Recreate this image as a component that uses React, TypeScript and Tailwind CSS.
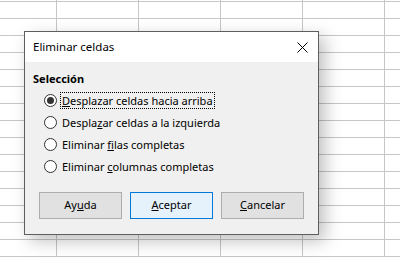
import React from 'react'

const COLS = [57, 82, 82, 82, 82, 82]
const ROWS = 16

function Sheet() {
  return (
    <div className="mt-[-15px] grid grid-cols-[57px_82px_82px_82px_82px_82px] auto-rows-[17px]">
      {Array.from({ length: ROWS * COLS.length }).map((_, i) => (
        <div key={i} className="border-r border-b border-[#c6c6c6]" />
      ))}
    </div>
  )
}

function Radio({ checked, children }: { checked?: boolean; children: React.ReactNode }) {
  return (
    <div className="flex h-[22px] items-center">
      <span className="flex h-[13px] w-[13px] items-center justify-center rounded-full border border-[#333333] bg-white">
        {checked && <span className="h-[7px] w-[7px] rounded-full bg-[#333333]" />}
      </span>
      <span
        className={`ml-[3px] px-[1px] leading-[15px] ${checked ? 'border border-dotted border-black' : 'border border-transparent'}`}
      >
        {children}
      </span>
    </div>
  )
}

function Btn({ primary, children }: { primary?: boolean; children: React.ReactNode }) {
  return (
    <button
      type="button"
      className={`flex h-[27px] w-[83px] items-center justify-center border ${primary ? 'border-[#0078d7] bg-[#e5f1fb]' : 'border-[#adadad] bg-[#e1e1e1]'}`}
    >
      {children}
    </button>
  )
}

export default function App() {
  return (
    <div className="relative h-[261px] w-[400px] overflow-hidden bg-white font-['Noto_Sans',sans-serif] text-[11px] text-black">
      <Sheet />

      <div className="absolute left-[24px] top-[31px] flex h-[204px] w-[295px] flex-col border border-[#5e5e5e] shadow-[6px_6px_16px_rgba(0,0,0,0.25)]">
        <div className="flex h-[30px] items-center justify-between bg-white pl-[8px] pr-[10px]">
          <span className="text-[11.5px]">Eliminar celdas</span>
          <svg width="11" height="11" viewBox="0 0 11 11">
            <path d="M0.5 0.5L10.5 10.5M10.5 0.5L0.5 10.5" stroke="#000" strokeWidth="1" fill="none" />
          </svg>
        </div>

        <div className="flex flex-1 flex-col bg-[#f0f0f0] px-[8px] pt-[9px]">
          <div className="h-[18px] font-bold leading-[16px]">Selección</div>
          <div className="ml-[11px]">
            <Radio checked>
              <u>D</u>esplazar celdas hacia arriba
            </Radio>
            <Radio>
              Despla<u>z</u>ar celdas a la izquierda
            </Radio>
            <Radio>
              Eliminar <u>f</u>ilas completas
            </Radio>
            <Radio>
              Eliminar <u>c</u>olumnas completas
            </Radio>
          </div>

          <div className="mt-[15px] flex gap-[8px] pl-[6px]">
            <Btn>
              Ay<u>u</u>da
            </Btn>
            <Btn primary>
              <u>A</u>ceptar
            </Btn>
            <Btn>
              <u>C</u>ancelar
            </Btn>
          </div>
        </div>
      </div>
    </div>
  )
}
